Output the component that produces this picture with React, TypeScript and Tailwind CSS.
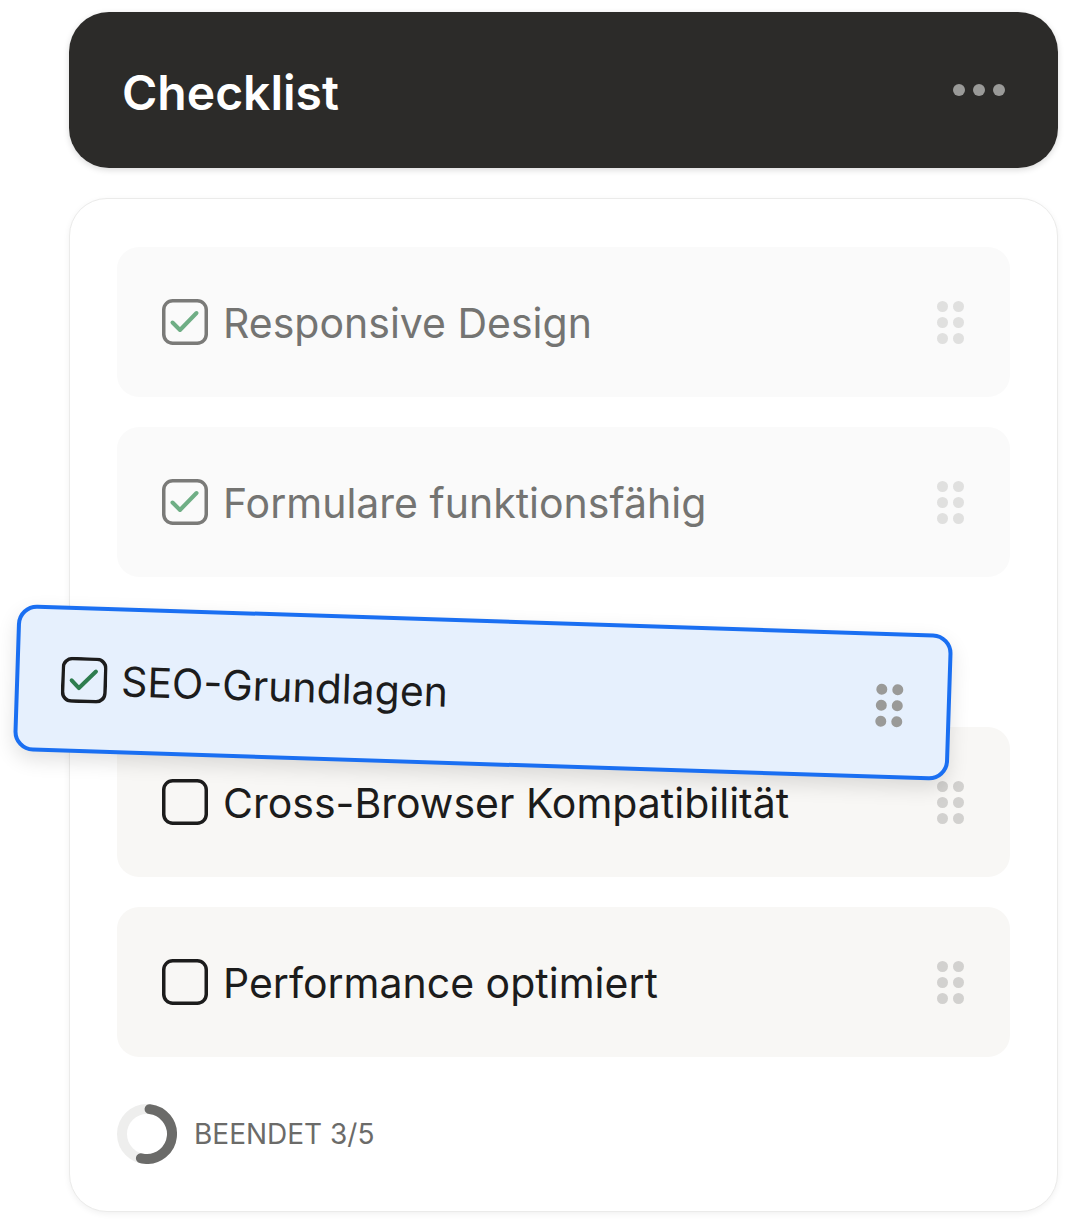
const FONT = { fontFamily: "Inter, 'Noto Sans', sans-serif" };

type Item = { label: string; done: boolean };

const ITEMS_TOP: Item[] = [
  { label: "Responsive Design", done: true },
  { label: "Formulare funktionsfähig", done: true },
];

const ITEMS_BOTTOM: Item[] = [
  { label: "Cross-Browser Kompatibilität", done: false },
  { label: "Performance optimiert", done: false },
];

function CheckBox({ done, tone }: { done: boolean; tone: "muted" | "dark" }) {
  const border = tone === "dark" ? "#1c1c1c" : done ? "#7a7a78" : "#1c1c1c";
  const check = tone === "dark" ? "#2e7d4f" : "#6fae85";
  return (
    <svg width="46" height="46" viewBox="0 0 46 46" fill="none" className="shrink-0">
      <rect x="1.75" y="1.75" width="42.5" height="42.5" rx="9" stroke={border} strokeWidth="3.5" />
      {done ? (
        <path
          d="M10.5 23.5l7.5 7.5 16.5-17"
          stroke={check}
          strokeWidth="4"
          strokeLinecap="round"
          strokeLinejoin="round"
        />
      ) : null}
    </svg>
  );
}

function DragDots({ color }: { color: string }) {
  return (
    <div className="grid grid-cols-2 gap-x-[5px] gap-y-[5px]">
      {[0, 1, 2, 3, 4, 5].map((i) => (
        <span key={i} className="block h-[11px] w-[11px] rounded-full" style={{ backgroundColor: color }} />
      ))}
    </div>
  );
}

function Row({ item }: { item: Item }) {
  return (
    <div
      className={`flex h-[150px] items-center rounded-[22px] pl-[45px] pr-[46px] ${
        item.done ? "bg-[#fafafa]" : "bg-[#f8f7f5]"
      }`}
    >
      <CheckBox done={item.done} tone="muted" />
      <span
        className={`ml-[15px] flex-1 pt-[3px] text-[41px] ${item.done ? "text-[#747472]" : "text-[#1c1c1c]"}`}
      >
        {item.label}
      </span>
      <DragDots color={item.done ? "#e0e0df" : "#d2d1cf"} />
    </div>
  );
}

function ProgressRing() {
  const r = 25;
  const c = 2 * Math.PI * r;
  return (
    <svg width="60" height="60" viewBox="0 0 60 60" className="shrink-0">
      <circle cx="30" cy="30" r={r} stroke="#eeeeed" strokeWidth="10" fill="none" />
      <circle
        cx="30"
        cy="30"
        r={r}
        stroke="#6b6b69"
        strokeWidth="10"
        fill="none"
        strokeLinecap="round"
        strokeDasharray={`${c * 0.52} ${c}`}
        transform="rotate(-84 30 30)"
      />
    </svg>
  );
}

export default function App() {
  return (
    <div className="min-h-[1224px] w-[1090px] bg-white pt-[12px]" style={FONT}>
      <div className="ml-[69px] w-[989px]">
        <div className="flex h-[156px] items-center justify-between rounded-[40px] bg-[#2c2b29] pl-[53px] pr-[53px] shadow-[0_2px_6px_rgba(0,0,0,0.15)]">
          <h1 className="pt-[6px] text-[48px] font-semibold text-white">Checklist</h1>
          <div className="flex gap-[8px]">
            <span className="block h-[12px] w-[12px] rounded-full bg-[#9a9a98]" />
            <span className="block h-[12px] w-[12px] rounded-full bg-[#9a9a98]" />
            <span className="block h-[12px] w-[12px] rounded-full bg-[#9a9a98]" />
          </div>
        </div>

        <div className="relative mt-[30px] rounded-[38px] border border-[#ebebea] bg-white px-[47px] pb-[47px] pt-[48px] shadow-[0_2px_6px_rgba(0,0,0,0.06)]">
          <div className="flex flex-col gap-[30px]">
            {ITEMS_TOP.map((item) => (
              <Row key={item.label} item={item} />
            ))}
            <div className="h-[90px]" />
            {ITEMS_BOTTOM.map((item) => (
              <Row key={item.label} item={item} />
            ))}
          </div>

          <div className="mt-[47px] flex items-center gap-[17px]">
            <ProgressRing />
            <span className="text-[28px] text-[#6b6b69]">BEENDET 3/5</span>
          </div>

          <div className="absolute left-[-55px] top-[420px] flex h-[147px] w-[936px] rotate-[1.84deg] items-center rounded-[20px] border-[4px] border-[#1a6ff2] bg-[#e6f0fd] pl-[42px] pr-[44px] shadow-[0_8px_20px_rgba(0,0,0,0.12)]">
            <CheckBox done tone="dark" />
            <span className="ml-[14px] flex-1 pt-[3px] text-[41px] text-[#1c1c1c]">SEO-Grundlagen</span>
            <DragDots color="#9a9a98" />
          </div>
        </div>
      </div>
    </div>
  );
}
